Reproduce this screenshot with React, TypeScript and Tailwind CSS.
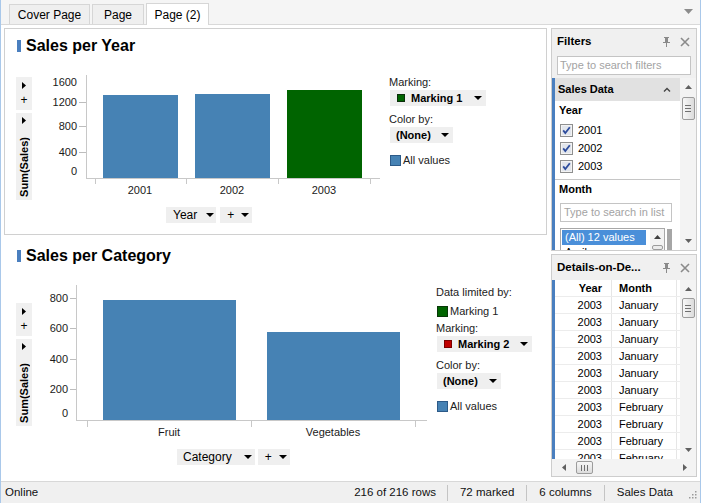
import React from "react";

const FONT = "'Liberation Sans', Arial, sans-serif";

function TriDown({ color = "#000", w = 8, h = 4 }: { color?: string; w?: number; h?: number }) {
  return (
    <svg width={w} height={h} viewBox={`0 0 ${w} ${h}`} className="shrink-0 block">
      <path d={`M0 0H${w}L${w / 2} ${h}Z`} fill={color} />
    </svg>
  );
}
function TriUp({ color = "#000", w = 8, h = 4 }: { color?: string; w?: number; h?: number }) {
  return (
    <svg width={w} height={h} viewBox={`0 0 ${w} ${h}`} className="shrink-0 block">
      <path d={`M0 ${h}H${w}L${w / 2} 0Z`} fill={color} />
    </svg>
  );
}
function TriRight({ color = "#000", w = 4, h = 7 }: { color?: string; w?: number; h?: number }) {
  return (
    <svg width={w} height={h} viewBox={`0 0 ${w} ${h}`} className="shrink-0 block">
      <path d={`M0 0L${w} ${h / 2}L0 ${h}Z`} fill={color} />
    </svg>
  );
}
function TriLeft({ color = "#000", w = 4, h = 7 }: { color?: string; w?: number; h?: number }) {
  return (
    <svg width={w} height={h} viewBox={`0 0 ${w} ${h}`} className="shrink-0 block">
      <path d={`M${w} 0L0 ${h / 2}L${w} ${h}Z`} fill={color} />
    </svg>
  );
}

function Pin() {
  return (
    <svg width="7" height="10" viewBox="0 0 7 10" className="block">
      <rect x="1" y="0" width="5" height="1" fill="#8a8a8a" />
      <rect x="2" y="1" width="3" height="4" fill="#8a8a8a" />
      <rect x="0" y="5" width="7" height="1" fill="#8a8a8a" />
      <rect x="3" y="6" width="1" height="4" fill="#8a8a8a" />
    </svg>
  );
}
function Close() {
  return (
    <svg width="10" height="10" viewBox="0 0 10 10" className="block">
      <path d="M1 1L9 9M9 1L1 9" stroke="#8a8a8a" strokeWidth="1.6" />
    </svg>
  );
}

function Check() {
  return (
    <svg width="13" height="13" viewBox="0 0 13 13" className="block shrink-0">
      <rect x="0.5" y="0.5" width="12" height="12" fill="#f3f3f3" stroke="#8e8f8f" />
      <rect x="2" y="2" width="9" height="9" fill="#e1e5ec" />
      <path d="M3.2 6.4L5.3 9L9.8 3.2" stroke="#2d4c9c" strokeWidth="1.8" fill="none" />
    </svg>
  );
}

function AxisButtons({ className }: { className: string }) {
  return (
    <div className={`w-[16px] flex flex-col gap-[3px] shrink-0 ${className}`}>
      <div className="h-[33px] bg-[#f0f0f0] flex flex-col items-center pt-[5px]">
        <TriRight />
        <span className="mt-[5px] text-[12px] leading-[12px]">+</span>
      </div>
      <div className="h-[87px] bg-[#f0f0f0] flex flex-col items-center pt-[4px]">
        <TriRight />
        <span className="mt-auto mb-[3px] text-[11px] font-bold leading-[14px] [writing-mode:vertical-rl] rotate-180">
          Sum(Sales)
        </span>
      </div>
    </div>
  );
}

function Title({ text }: { text: string }) {
  return (
    <div className="flex items-center h-[18px] mt-[8px] pl-[12px] gap-[5px] shrink-0">
      <div className="w-[4px] h-[12px] bg-[#4a7fbf]" />
      <span className="text-[16px] font-bold leading-[18px] text-black">{text}</span>
    </div>
  );
}

const txt = { fontFamily: FONT, fontSize: 11, fill: "#1a1a1a" } as const;

function TopChart() {
  const ylabels: [string, number, boolean][] = [
    ["1600", 22, false],
    ["1200", 42, true],
    ["800", 66, true],
    ["400", 92, true],
    ["0", 111, false],
  ];
  return (
    <svg width="350" height="145" className="ml-[3px] mt-[5px] shrink-0 block">
      <line x1="51.5" y1="15" x2="51.5" y2="118" stroke="#c8c8c8" />
      <line x1="51" y1="118.5" x2="345" y2="118.5" stroke="#c8c8c8" />
      {[60, 151, 243, 335].map((x) => (
        <line key={x} x1={x + 0.5} y1="118" x2={x + 0.5} y2="124" stroke="#c8c8c8" />
      ))}
      {ylabels.map(([l, y, d]) => (
        <g key={l}>
          <text x="42" y={y} textAnchor="end" dominantBaseline="central" style={txt}>
            {l}
          </text>
          {d && <line x1="44" y1={y + 0.5} x2="51" y2={y + 0.5} stroke="#bdbdbd" />}
        </g>
      ))}
      <rect x="68" y="35" width="75" height="83" fill="#4682b4" />
      <rect x="160" y="34" width="75" height="84" fill="#4682b4" />
      <rect x="252" y="30" width="75" height="88" fill="#006400" />
      {[
        ["2001", 105],
        ["2002", 197],
        ["2003", 289],
      ].map(([l, x]) => (
        <text key={l} x={x} y="130" textAnchor="middle" dominantBaseline="central" style={txt}>
          {l}
        </text>
      ))}
    </svg>
  );
}

function BottomChart() {
  const ylabels: [string, number, boolean][] = [
    ["800", 18, true],
    ["600", 48, true],
    ["400", 79, true],
    ["200", 109, true],
    ["0", 133, false],
  ];
  return (
    <svg width="395" height="165" className="ml-[3px] mt-[15px] shrink-0 block">
      <line x1="41.5" y1="5" x2="41.5" y2="140" stroke="#c8c8c8" />
      <line x1="41" y1="140.5" x2="392" y2="140.5" stroke="#c8c8c8" />
      {[52, 216, 380].map((x) => (
        <line key={x} x1={x + 0.5} y1="140" x2={x + 0.5} y2="147" stroke="#c8c8c8" />
      ))}
      {ylabels.map(([l, y, d]) => (
        <g key={l}>
          <text x="33" y={y} textAnchor="end" dominantBaseline="central" style={txt}>
            {l}
          </text>
          {d && <line x1="35" y1={y + 0.5} x2="41" y2={y + 0.5} stroke="#bdbdbd" />}
        </g>
      ))}
      <rect x="68" y="20" width="133" height="120" fill="#4682b4" />
      <rect x="232" y="52" width="133" height="88" fill="#4682b4" />
      <text x="134" y="152" textAnchor="middle" dominantBaseline="central" style={txt}>
        Fruit
      </text>
      <text x="298" y="152" textAnchor="middle" dominantBaseline="central" style={txt}>
        Vegetables
      </text>
    </svg>
  );
}

function Thumb({ className }: { className: string }) {
  return (
    <div
      className={`w-[13px] rounded-[2px] border border-[#9c9c9c] bg-gradient-to-r from-[#f7f7f7] to-[#dcdcdc] flex flex-col items-center justify-center gap-[2px] ${className}`}
    >
      <div className="w-[6px] h-px bg-[#707070]" />
      <div className="w-[6px] h-px bg-[#707070]" />
      <div className="w-[6px] h-px bg-[#707070]" />
    </div>
  );
}

function VScroll({ thumbClass }: { thumbClass: string }) {
  return (
    <div className="w-[16px] shrink-0 bg-[#f3f3f3] flex flex-col items-center">
      <div className="h-[18px] flex items-center justify-center">
        <TriUp color="#606060" w={7} h={4} />
      </div>
      <Thumb className={thumbClass} />
      <div className="mt-auto h-[18px] flex items-center justify-center">
        <TriDown color="#606060" w={7} h={4} />
      </div>
    </div>
  );
}

function FiltersPanel() {
  return (
    <div className="h-[223px] shrink-0 border border-[#cdcdcd] bg-[#f0f0f0] flex flex-col">
      <div className="h-[25px] shrink-0 flex items-center pl-[5px] pr-[6px]">
        <span className="text-[11.5px] font-bold">Filters</span>
        <div className="ml-auto flex items-center gap-[10px]">
          <Pin />
          <Close />
        </div>
      </div>
      <div className="mx-[5px] mt-[2px] h-[19px] shrink-0 bg-white border border-[#c4c4c4] flex items-center pl-[2px] text-[11px] text-[#a3a3a3]">
        Type to search filters
      </div>
      <div className="mt-[3px] flex-1 min-h-0 flex">
        <div className="w-[3px] shrink-0 bg-[#4a7fbf]" />
        <div className="flex-1 min-w-0 bg-white flex flex-col overflow-hidden">
          <div className="h-[23px] shrink-0 bg-[#e1e1e1] flex items-center pl-[3px] pr-[9px]">
            <span className="text-[11px] font-bold">Sales Data</span>
            <svg width="8" height="5" viewBox="0 0 8 5" className="ml-auto block">
              <path d="M1 4.5L4 1.5L7 4.5" stroke="#444" strokeWidth="1.4" fill="none" />
            </svg>
          </div>
          <div className="h-[19px] shrink-0 flex items-center pl-[4px] text-[11px] font-bold">Year</div>
          <div className="mt-px flex flex-col shrink-0">
            {["2001", "2002", "2003"].map((y) => (
              <div key={y} className="h-[18px] flex items-center pl-[5px] gap-[5px] text-[11px]">
                <Check />
                <span>{y}</span>
              </div>
            ))}
          </div>
          <div className="mt-[4px] h-px shrink-0 bg-[#c6c6c6]" />
          <div className="h-[18px] shrink-0 flex items-center pl-[4px] text-[11px] font-bold">Month</div>
          <div className="ml-[5px] mt-[5px] w-[112px] h-[19px] shrink-0 bg-white border border-[#c4c4c4] flex items-center pl-[3px] text-[11px] text-[#a3a3a3]">
            Type to search in list
          </div>
          <div className="mt-[6px] flex flex-1 min-h-0">
            <div className="ml-[5px] w-[105px] border border-b-0 border-[#a8a8a8] flex overflow-hidden">
              <div className="flex-1 flex flex-col pl-px pt-px">
                <div className="h-[15px] w-[84px] bg-[#4a8fd9] text-white text-[11px] flex items-center pl-[3px]">
                  (All) 12 values
                </div>
                <div className="h-[14px] text-[11px] pl-[3px] leading-[14px]">April</div>
              </div>
              <div className="w-[14px] bg-[#f3f3f3] flex flex-col items-center pt-[6px]">
                <TriUp color="#404040" w={7} h={4} />
                <div className="mt-[6px] w-[11px] h-[10px] rounded-[2px] border border-[#9c9c9c] bg-[#ececec]" />
              </div>
            </div>
            <div className="ml-[2px] mt-px w-[5px] bg-[#a6a6a6]" />
          </div>
        </div>
        <VScroll thumbClass="h-[23px] mt-px" />
      </div>
    </div>
  );
}

function DetailsPanel() {
  const rows = [
    "January",
    "January",
    "January",
    "January",
    "January",
    "January",
    "February",
    "February",
    "February",
    "February",
  ];
  return (
    <div className="h-[223px] shrink-0 border border-[#cdcdcd] bg-[#f0f0f0] flex flex-col">
      <div className="h-[25px] shrink-0 flex items-center pl-[5px] pr-[6px]">
        <span className="text-[11.5px] font-bold">Details-on-De...</span>
        <div className="ml-auto flex items-center gap-[10px]">
          <Pin />
          <Close />
        </div>
      </div>
      <div className="flex-1 min-h-0 flex flex-col bg-white">
        <div className="flex-1 min-h-0 flex">
          <div className="w-[3px] shrink-0 bg-[#4a7fbf]" />
          <div className="flex-1 min-w-0 overflow-hidden text-[11px]">
            <div className="flex h-[17px] border-b border-[#ececec] font-bold">
              <div className="w-[57px] pr-[9px] text-right leading-[16px] border-r border-[#e6e6e6]">Year</div>
              <div className="w-[65px] pl-[7px] leading-[16px] border-r border-[#e6e6e6]">Month</div>
            </div>
            {rows.map((m, i) => (
              <div key={i} className="flex h-[17px] border-b border-[#ececec]">
                <div className="w-[57px] pr-[9px] text-right leading-[16px] border-r border-[#e6e6e6]">2003</div>
                <div className="w-[65px] pl-[7px] leading-[16px] border-r border-[#e6e6e6]">{m}</div>
              </div>
            ))}
          </div>
          <VScroll thumbClass="h-[20px]" />
        </div>
        <div className="h-[17px] shrink-0 bg-[#f3f3f3] flex items-center pl-[10px] pr-[9px]">
          <TriLeft color="#606060" w={4} h={7} />
          <div className="ml-[10px] w-[17px] h-[13px] rounded-[2px] border border-[#9c9c9c] bg-gradient-to-b from-[#f7f7f7] to-[#dcdcdc] flex items-center justify-center gap-[2px]">
            <div className="w-px h-[6px] bg-[#707070]" />
            <div className="w-px h-[6px] bg-[#707070]" />
            <div className="w-px h-[6px] bg-[#707070]" />
          </div>
          <div className="ml-auto">
            <TriRight color="#606060" w={4} h={7} />
          </div>
        </div>
      </div>
    </div>
  );
}

function Sep() {
  return <div className="w-px h-[16px] bg-[#c4c4c4]" />;
}

export default function App() {
  return (
    <div
      className="w-[701px] h-[503px] flex flex-col bg-white overflow-hidden text-black border-l border-r border-[#a9c8ea]"
      style={{ fontFamily: FONT }}
    >
      {/* Tabs */}
      <div className="h-[25px] shrink-0 bg-[#f5f5f5] border-b border-[#d9d9d9] flex items-end pl-[8px] gap-[2px] relative">
        <div className="w-[81px] h-[20px] bg-[#efefef] border border-b-0 border-[#d6d6d6] flex items-center justify-center text-[12px]">
          Cover Page
        </div>
        <div className="w-[52px] h-[20px] bg-[#efefef] border border-b-0 border-[#d6d6d6] flex items-center justify-center text-[12px]">
          Page
        </div>
        <div className="w-[63px] h-[22px] -mb-px bg-white border border-b-0 border-[#d6d6d6] flex items-center justify-center text-[12px]">
          Page (2)
        </div>
        <div className="absolute right-[7px] top-[9px]">
          <TriDown color="#8c8c8c" w={9} h={5} />
        </div>
      </div>

      {/* Main */}
      <div className="flex-1 min-h-0 flex">
        {/* Left column */}
        <div className="w-[546px] shrink-0 pl-[3px] pt-[3px] flex flex-col gap-[3px]">
          {/* Top panel */}
          <div className="h-[207px] shrink-0 border border-[#d0d0d0] flex flex-col">
            <Title text="Sales per Year" />
            <div className="flex items-start h-[150px] shrink-0">
              <AxisButtons className="ml-[11px] mt-[22px]" />
              <TopChart />
              <div className="ml-[4px] mt-[20px] flex flex-col items-start text-[11px] text-[#222]">
                <div className="h-[14px] leading-[14px]">Marking:</div>
                <div className="ml-px mt-px h-[16px] bg-[#efefef] flex items-center pl-[7px] pr-[4px] font-bold text-black">
                  <div className="w-[8px] h-[8px] bg-[#006400] border border-[#0b2e0b]" />
                  <span className="ml-[6px]">Marking 1</span>
                  <span className="ml-[12px]">
                    <TriDown />
                  </span>
                </div>
                <div className="mt-[6px] h-[14px] leading-[14px]">Color by:</div>
                <div className="ml-px mt-px h-[16px] bg-[#efefef] flex items-center pl-[6px] pr-[4px] font-bold text-black">
                  <span>(None)</span>
                  <span className="ml-[10px]">
                    <TriDown />
                  </span>
                </div>
                <div className="ml-px mt-[12px] h-[11px] flex items-center">
                  <div className="w-[11px] h-[11px] bg-[#4682b4] border border-[#2c5a88]" />
                  <span className="ml-[2px] leading-[11px]">All values</span>
                </div>
              </div>
            </div>
            <div className="flex items-center gap-[4px] pl-[161px] mt-[2px]">
              <div className="h-[16px] bg-[#efefef] flex items-center pl-[7px] pr-[2px] text-[12px]">
                <span>Year</span>
                <span className="ml-[9px]">
                  <TriDown />
                </span>
              </div>
              <div className="h-[16px] bg-[#efefef] flex items-center pl-[7px] pr-[3px] text-[12px]">
                <span>+</span>
                <span className="ml-[7px]">
                  <TriDown />
                </span>
              </div>
            </div>
          </div>

          {/* Bottom panel */}
          <div className="flex-1 min-h-0 border border-transparent flex flex-col">
            <Title text="Sales per Category" />
            <div className="flex items-start h-[180px] shrink-0">
              <AxisButtons className="ml-[11px] mt-[38px]" />
              <BottomChart />
              <div className="ml-[6px] mt-[20px] flex flex-col items-start text-[11px] text-[#222]">
                <div className="h-[14px] leading-[14px]">Data limited by:</div>
                <div className="ml-px mt-[7px] h-[11px] flex items-center">
                  <div className="w-[11px] h-[11px] bg-[#006400] border border-[#083808]" />
                  <span className="ml-[2px] leading-[11px]">Marking 1</span>
                </div>
                <div className="mt-[4px] h-[14px] leading-[14px]">Marking:</div>
                <div className="ml-px mt-px h-[16px] bg-[#efefef] flex items-center pl-[7px] pr-[4px] font-bold text-black">
                  <div className="w-[8px] h-[8px] bg-[#c00000] border border-[#7a0000]" />
                  <span className="ml-[6px]">Marking 2</span>
                  <span className="ml-[11px]">
                    <TriDown />
                  </span>
                </div>
                <div className="mt-[6px] h-[14px] leading-[14px]">Color by:</div>
                <div className="ml-px mt-px h-[16px] bg-[#efefef] flex items-center pl-[6px] pr-[4px] font-bold text-black">
                  <span>(None)</span>
                  <span className="ml-[11px]">
                    <TriDown />
                  </span>
                </div>
                <div className="ml-px mt-[12px] h-[11px] flex items-center">
                  <div className="w-[11px] h-[11px] bg-[#4682b4] border border-[#2c5a88]" />
                  <span className="ml-[2px] leading-[11px]">All values</span>
                </div>
              </div>
            </div>
            <div className="flex items-center gap-[3px] pl-[172px] mt-[4px]">
              <div className="h-[16px] bg-[#efefef] flex items-center pl-[6px] pr-[3px] text-[12px]">
                <span>Category</span>
                <span className="ml-[12px]">
                  <TriDown />
                </span>
              </div>
              <div className="h-[16px] bg-[#efefef] flex items-center pl-[7px] pr-[3px] text-[12px]">
                <span>+</span>
                <span className="ml-[7px]">
                  <TriDown />
                </span>
              </div>
            </div>
          </div>
        </div>

        {/* Right column */}
        <div className="flex-1 min-w-0 pl-[4px] pr-[3px] pt-[3px] flex flex-col gap-[3px]">
          <FiltersPanel />
          <DetailsPanel />
        </div>
      </div>

      {/* Status bar */}
      <div className="h-[22px] shrink-0 bg-[#f0f0f0] border-t border-[#d8d8d8] flex items-center text-[11.5px] text-[#111]">
        <span className="pl-[4px]">Online</span>
        <div className="ml-auto flex items-center h-full">
          <span className="pr-[11px]">216 of 216 rows</span>
          <Sep />
          <span className="px-[12px]">72 marked</span>
          <Sep />
          <span className="px-[12px]">6 columns</span>
          <Sep />
          <span className="pl-[12px]">Sales Data</span>
          <svg width="9" height="9" viewBox="0 0 9 9" className="ml-[15px] mr-[3px] mt-[4px] block">
            <rect x="7" y="1" width="1.5" height="1.5" fill="#9a9a9a" />
            <rect x="4" y="4" width="1.5" height="1.5" fill="#9a9a9a" />
            <rect x="7" y="4" width="1.5" height="1.5" fill="#9a9a9a" />
            <rect x="1" y="7" width="1.5" height="1.5" fill="#9a9a9a" />
            <rect x="4" y="7" width="1.5" height="1.5" fill="#9a9a9a" />
            <rect x="7" y="7" width="1.5" height="1.5" fill="#9a9a9a" />
          </svg>
        </div>
      </div>
    </div>
  );
}
